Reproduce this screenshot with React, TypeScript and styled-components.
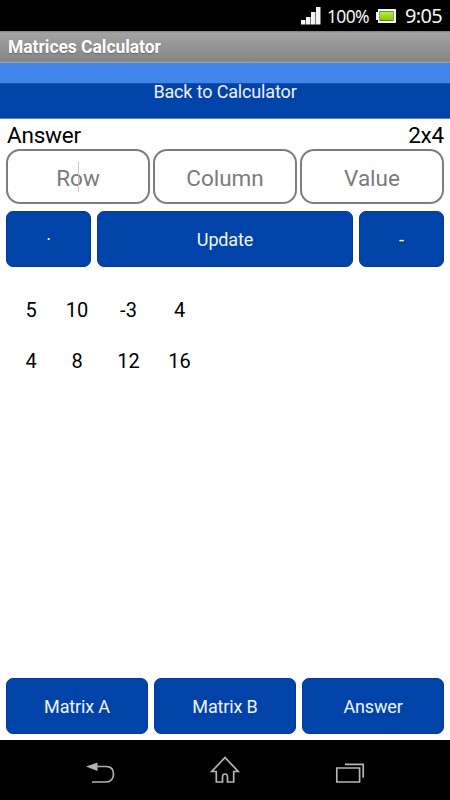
import React from "react";
import styled, { createGlobalStyle } from "styled-components";

const Global = createGlobalStyle`
  * { box-sizing: border-box; }
  body { margin: 0; background: #000; }
`;

const Screen = styled.main`
  width: 450px;
  height: 800px;
  display: flex;
  flex-direction: column;
  background: #fff;
  font-family: Roboto, "Noto Sans", sans-serif;
  overflow: hidden;
`;

const StatusBar = styled.header`
  height: 31px;
  background: #000;
  color: #f4f4f4;
  display: flex;
  align-items: center;
  justify-content: flex-end;
  padding: 1px 8px 0 0;
  font-family: "Noto Sans", sans-serif;
`;

const StatusIcon = styled.svg`
  display: block;
  flex: none;
`;

const Percent = styled.span`
  width: 42px;
  margin: 0 7px 0 6px;
  font-size: 17.5px;
  white-space: nowrap;
  letter-spacing: -0.65px;
`;

const Clock = styled.span`
  width: 37px;
  margin-left: 9px;
  font-size: 20px;
  white-space: nowrap;
  letter-spacing: -0.7px;
  padding-bottom: 2px;
`;

const TitleBar = styled.h1`
  height: 32px;
  margin: 0;
  padding: 1px 0 0 8px;
  background: linear-gradient(#7c7c7c 0, #a3a3a3 2px, #868686 29px, #7f7f7c 30px, #a0a09a 31px);
  color: #fff;
  font-size: 17.5px;
  font-weight: 700;
  line-height: 31px;
  letter-spacing: -0.05px;
  text-shadow: 0 1px 1px rgba(0, 0, 0, 0.25);
`;

const BackButton = styled.button`
  height: 56px;
  border: 0;
  border-bottom: 1px solid #5a7fc4;
  padding: 3px 0 0;
  background: linear-gradient(#4085e9 20px, #1d62c9 20px, #0044a9 21px);
  color: #f3efff;
  font: 400 18px/20px Roboto, sans-serif;
  letter-spacing: -0.15px;
`;

const Content = styled.section`
  flex: 1;
  padding: 3px 6px 6px;
  display: flex;
  flex-direction: column;
`;

const Heading = styled.div`
  height: 27px;
  padding: 0 0 0 1px;
  display: flex;
  justify-content: space-between;
  font-size: 22.5px;
  line-height: 26px;
  letter-spacing: -0.2px;
  color: #000;
`;

const Fields = styled.div`
  display: grid;
  grid-template-columns: repeat(3, 1fr);
  gap: 3px;
  height: 55px;
`;

const Field = styled.div`
  border: 2px solid #7d7d7d;
  border-radius: 14px;
  display: flex;
  align-items: center;
  justify-content: center;
  position: relative;
  padding-top: 2px;
  color: #7b7b7b;
  font-size: 22.5px;
`;

const Caret = styled.i`
  position: absolute;
  left: 50%;
  top: 11px;
  width: 1px;
  height: 30px;
  background: #c4c4c4;
`;

const Buttons = styled.div<{ $columns: string }>`
  display: grid;
  grid-template-columns: ${(p) => p.$columns};
  gap: 6px;
  height: 56px;
`;

const ActionRow = styled(Buttons)`
  margin-top: 7px;
`;

const Button = styled.button`
  border: 1px solid #0636a0;
  border-radius: 7px;
  background: #0044a9;
  color: #f3f3ff;
  padding: 1px 0 0;
  font: 400 18px/22px Roboto, sans-serif;
  letter-spacing: -0.15px;
`;

const Matrix = styled.div`
  display: grid;
  grid-template-columns: 40px 52px 51px 51px;
  grid-auto-rows: 51px;
  margin: 17px 0 0 5px;
  align-items: center;
  justify-items: center;
  color: #000;
  font-size: 20px;
`;

const Tabs = styled(Buttons)`
  margin-top: auto;
`;

const NavBar = styled.nav`
  height: 60px;
  background: #000;
  display: grid;
  grid-template-columns: repeat(3, 50px);
  justify-content: center;
  column-gap: 75px;
  padding-top: 10px;
`;

const NavIcon = styled.svg`
  fill: none;
  stroke: #b4b4b4;
  stroke-width: 1.7;
`;

const cells = ["5", "10", "-3", "4", "4", "8", "12", "16"];

export default function App() {
  return (
    <>
      <Global />
      <Screen>
        <StatusBar>
          <StatusIcon width="20" height="18" viewBox="0 0 20 18" fill="#f4f4f4">
            <path d="M0 13h4.5v4.5H0zM5 10h4.5v7.5H5zM10 5h4.5v12.5H10zM15 0h4.5v17.5H15z" />
          </StatusIcon>
          <Percent>100%</Percent>
          <StatusIcon width="20" height="14" viewBox="0 0 20 14">
            <defs>
              <linearGradient id="charge" x2="0" y2="1">
                <stop stopColor="#b8ee48" />
                <stop offset="1" stopColor="#82c800" />
              </linearGradient>
            </defs>
            <path d="M2 0h18v14H2v-3H0V3h2z" fill="#f4f4f4" />
            <path d="M3.5 2h14v10h-14z" fill="#334010" />
            <path d="M4 2.5h13v9H4z" fill="url(#charge)" />
          </StatusIcon>
          <Clock>9:05</Clock>
        </StatusBar>
        <TitleBar>Matrices Calculator</TitleBar>
        <BackButton>Back to Calculator</BackButton>
        <Content>
          <Heading>
            <span>Answer</span>
            <span>2x4</span>
          </Heading>
          <Fields>
            <Field>Row<Caret /></Field>
            <Field>Column</Field>
            <Field>Value</Field>
          </Fields>
          <ActionRow $columns="85px 1fr 85px">
            <Button>·</Button>
            <Button>Update</Button>
            <Button>-</Button>
          </ActionRow>
          <Matrix>
            {cells.map((value, i) => (
              <span key={i}>{value}</span>
            ))}
          </Matrix>
          <Tabs $columns="repeat(3, 1fr)">
            <Button>Matrix A</Button>
            <Button>Matrix B</Button>
            <Button>Answer</Button>
          </Tabs>
        </Content>
        <NavBar>
          <NavIcon width="50" height="40" viewBox="0 0 50 40">
            <path d="M20 16.500h11c5 0 7.500 3 7.500 7.500s-2.500 8-7.500 8H17" />
            <path d="M11 16.500l11.500-4v8.500z" fill="#b4b4b4" stroke="none" />
          </NavIcon>
          <NavIcon width="50" height="40" viewBox="0 0 50 40">
            <path d="M25 7.500L11.800 21.500h4.500v10.500h6.200v-5c0-4 5-4 5 0v5h6.200V21.500h4.500z" />
          </NavIcon>
          <NavIcon width="50" height="40" viewBox="0 0 50 40">
            <path d="M11.800 18h22.800v14H11.800zM20 14.300h18.200v13.500" />
          </NavIcon>
        </NavBar>
      </Screen>
    </>
  );
}
